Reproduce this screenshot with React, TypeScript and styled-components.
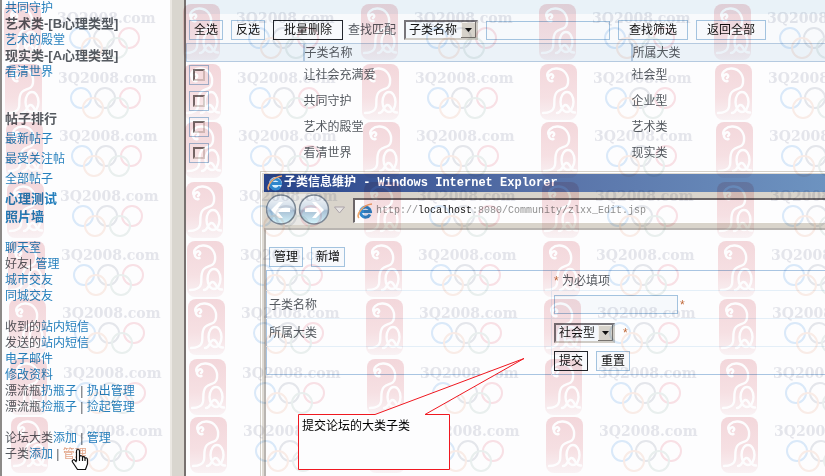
import React from "react";
import styled, { createGlobalStyle } from "styled-components";

const GlobalStyle = createGlobalStyle`
  * { box-sizing: border-box; }
  body {
    margin: 0;
    overflow: hidden;
    background: #fdfdfe;
    color: #555a60;
    font: 12px/16px "Liberation Sans", "Noto Sans CJK SC", sans-serif;
  }
  button, input, select { font: inherit; }
`;

const Page = styled.div`
  position: relative;
  display: flex;
  height: 100vh;
  overflow: hidden;
  background: #fdfdfe;
`;

const Sidebar = styled.nav`
  flex: 0 0 170px;
  border-left: 2px solid #8c8a88;
  padding-left: 3px;
  white-space: nowrap;
  display: flex;
  flex-direction: column;
  gap: 15px;
`;

const Group = styled.div<{ $spaced?: boolean }>`
  margin-top: ${(p) => (p.$spaced ? "14px" : "0")};
`;

const Line = styled.div<{ $bold?: boolean; $tall?: boolean }>`
  font-weight: ${(p) => (p.$bold ? 700 : 400)};
  font-size: ${(p) => (p.$bold ? 13 : 12)}px;
  line-height: ${(p) => (p.$tall ? 20 : 16)}px;
`;

const Link = styled.a<{ $hot?: boolean }>`
  color: ${(p) => (p.$hot ? "#e2a588" : "#2680bd")};
  text-decoration: none;
`;

const ScrollStrip = styled.div`
  flex: 0 0 16px;
  background: #d9d6cf;
  border-left: 2px solid #ebe8e3;
  border-right: 2px solid #77716f;
`;

const Main = styled.main`
  flex: 1;
  min-width: 0;
`;

const Toolbar = styled.div`
  display: flex;
  align-items: center;
  gap: 8px;
  height: 43px;
  padding: 17px 3px 0;
  background: linear-gradient(#e9f2f8 14px, #f8fafc 14px);
`;

const Button = styled.button<{ $strong?: boolean; $wide?: boolean }>`
  flex: none;
  width: ${(p) => (p.$wide ? 70 : 34)}px;
  height: 20px;
  padding: 0;
  border: 1px solid ${(p) => (p.$strong ? "#22262c" : "#a3c3df")};
  border-radius: 0;
  background: #f7f9fc;
  color: #111;
  line-height: 16px;
`;

const FieldLabel = styled.label`
  flex: none;
  margin: 0 0 0 -3px;
`;

const SelectBox = styled.span<{ $width: number }>`
  position: relative;
  flex: none;
  display: inline-block;
  width: ${(p) => p.$width}px;
  height: 20px;
  vertical-align: top;
`;

const Select = styled.select`
  appearance: none;
  display: block;
  width: 100%;
  height: 20px;
  padding: 0 0 0 3px;
  border: 2px solid;
  border-color: #77757a #cfccc6 #cfccc6 #77757a;
  border-radius: 0;
  background: #f4f8fc;
  color: #111;
  line-height: 16px;
`;

const SelectArrow = styled.svg`
  position: absolute;
  top: 2px;
  right: 2px;
  pointer-events: none;
`;

const TextField = styled.input`
  width: 124px;
  height: 19px;
  padding: 0 3px;
  border: 1px solid #a3c3df;
  border-radius: 0;
  background: #f6f9fc;
`;

const List = styled.table`
  width: 100%;
  table-layout: fixed;
  border-collapse: collapse;
  th, td { padding: 0; text-align: left; font-weight: 400; }
  th { height: 18px; line-height: 16px; background: #ebf2f8; border: 1px solid #b5cae0; border-right: 0; }
  th:nth-child(2), th:nth-child(3) { border-left-width: 2px; }
  td { height: 26px; }
  td:first-child { padding-left: 2px; }
  .pick { width: 117px; }
  .name { width: 328px; }
`;

const Tick = styled.span`
  display: grid;
  place-items: center;
  width: 20px;
  height: 20px;
  border: 1px solid #a3c3df;
`;

const TickBox = styled.input`
  appearance: none;
  width: 12px;
  height: 12px;
  margin: 0;
  border: 2px solid;
  border-color: #77706f #d8d3cf #d8d3cf #77706f;
  background: #fff;
`;

const Popup = styled.section`
  position: absolute;
  top: 171px;
  left: 260px;
  right: 0;
  bottom: 0;
  padding: 2px 0 0 3px;
  border: solid #d5d1c9;
  border-width: 1px 0 0 1px;
  background: #dedad3;
  box-shadow: inset 1px 1px #fff;
`;

const TitleBar = styled.h1`
  display: flex;
  align-items: center;
  gap: 1px;
  height: 18px;
  margin: 0;
  padding-left: 3px;
  background: linear-gradient(90deg, #27438a, #5872a8 50%, #6d93c0);
  color: #fff;
  font: bold 12px/18px "Liberation Mono", "Noto Sans CJK SC", monospace;
`;

const AddressRow = styled.div`
  display: flex;
  align-items: center;
  height: 36px;
  padding-left: 2px;
  background: #d9d4cb;
`;

const Address = styled.label`
  flex: 1;
  display: flex;
  align-items: center;
  gap: 3px;
  height: 25px;
  margin-left: 7px;
  padding-left: 2px;
  border: solid;
  border-width: 2px 0 1px 2px;
  border-color: #6b6668 #fff #fff #6b6668;
  background: #fdfdfe;
`;

const AddressInput = styled.input`
  flex: 1;
  min-width: 0;
  padding: 0;
  border: 0;
  outline: 0;
  background: linear-gradient(90deg, #8a8a8a 7ch, #111 7ch 16ch, #8a8a8a 16ch);
  background-clip: text;
  color: transparent;
  font: 10px/16px "Liberation Mono", monospace;
`;

const NavIcons = styled.svg`
  flex: none;
`;

const Content = styled.div`
  height: 100%;
  border: solid #b9b5b1;
  border-width: 2px 0 0 2px;
  background: #fdfdfe;
`;

const Actions = styled.div`
  display: flex;
  gap: 8px;
  padding: 17px 3px 3px;
`;

const FormTable = styled.table`
  width: 100%;
  table-layout: fixed;
  border-collapse: collapse;
  border: 1px solid #a9c5e2;
  border-right: 0;
  td, th { height: 28px; padding: 0 2px; text-align: left; font-weight: 400; border-top: 1px solid #e4eff8; }
  tr:first-child td { height: 20px; border-top-color: #a9c5e2; }
  td:nth-child(2) { border-left: 1px solid #e4eff8; }
  .label { width: 285px; }
`;

const Fields = styled.div`
  display: flex;
  align-items: center;
  gap: 8px;
`;

const Star = styled.span<{ $near?: boolean }>`
  margin-left: ${(p) => (p.$near ? "-6px" : "0")};
  color: #c0693a;
`;

const Watermark = styled.svg`
  position: absolute;
  top: 0;
  left: 0;
  width: 100%;
  height: 100%;
  pointer-events: none;
  mix-blend-mode: multiply;
`;

const Callout = styled.aside`
  position: absolute;
  top: 357px;
  left: 297px;
  width: 230px;
  height: 115px;
  padding: 61px 5px 0;
  color: #000;
`;

const CalloutShape = styled.svg`
  position: absolute;
  top: 0;
  left: 0;
`;

const CalloutText = styled.p`
  position: relative;
  margin: 0;
`;

const Hand = styled.svg`
  position: absolute;
  top: 448px;
  left: 71px;
`;

const records = [
  ["让社会充满爱", "社会型"],
  ["共同守护", "企业型"],
  ["艺术的殿堂", "艺术类"],
  ["看清世界", "现实类"],
];

function A({ children, hot }: { children: React.ReactNode; hot?: boolean }) {
  return <Link href="#" $hot={hot}>{children}</Link>;
}

function DropDown({ id, label, width, options }: { id: string; label?: string; width: number; options: string[] }) {
  return (
    <SelectBox $width={width}>
      <Select id={id} aria-label={label}>
        {options.map((o) => <option key={o}>{o}</option>)}
      </Select>
      <SelectArrow width="15" height="16" viewBox="0 0 15 16" aria-hidden="true">
        <path d="M0 0h15v16H0z" fill="#d6d2ca" />
        <path d="M.5 15V.5H14" fill="none" stroke="#f4f2ee" />
        <path d="M0 15.500h14.500V0" fill="none" stroke="#77736f" />
        <path d="M4 6h7L7.500 10z" fill="#111" />
      </SelectArrow>
    </SelectBox>
  );
}

function ExplorerIcon() {
  return (
    <NavIcons width="16" height="16" viewBox="0 0 16 16" aria-hidden="true">
      <circle cx="8.500" cy="8.500" r="6.500" fill="#d8efff" />
      <path d="M13 11.500A5 5 0 1 1 13.500 8.500H5" fill="none" stroke="#2f86cc" strokeWidth="2.800" />
      <path d="M2 15C-1 12 5 2 15 1" fill="none" stroke="#f0a86c" strokeWidth="1.600" />
    </NavIcons>
  );
}

function HistoryButtons() {
  return (
    <NavIcons width="80" height="34" viewBox="0 0 80 34" aria-hidden="true">
      <defs>
        <linearGradient id="orb" x2="0" y2="1">
          <stop offset="0" stopColor="#f4f7fa" />
          <stop offset=".48" stopColor="#cfdbe7" />
          <stop offset=".54" stopColor="#a9c0d4" />
          <stop offset="1" stopColor="#d4f4fc" />
        </linearGradient>
      </defs>
      <path d="M15 1H50a16 16 0 0 1 0 31H15a15 15 0 0 1 0-31z" fill="#e9e8e5" />
      {[15, 48].map((x) => (
        <circle key={x} cx={x} cy="16.500" r="14.500" fill="url(#orb)" stroke="#7c8794" strokeWidth="1.500" />
      ))}
      <path d="M5 17l8-8h4l-5 6h12v4H12l5 6h-4z" fill="#fff" />
      <path d="M58 17l-8-8h-4l5 6H39v4h12l-5 6h4z" fill="#fff" />
      <path d="M68.500 14h10l-5 6z" fill="#e8e5e4" stroke="#aaa3a8" />
    </NavIcons>
  );
}

const stampColumns = [0, 179, 357, 535, 710];
const stampRows = [4, 64, 122, 182, 241, 299, 359, 417];

function WatermarkLayer() {
  return (
    <Watermark aria-hidden="true">
      <defs>
        <linearGradient id="seal" x2="0" y2="1">
          <stop offset="0" stopColor="#f5d9dc" />
          <stop offset=".6" stopColor="#f8e2e4" />
          <stop offset="1" stopColor="#fbf4f5" />
        </linearGradient>
        <g id="mark">
          <rect width="37" height="56" rx="8" fill="url(#seal)" />
          <g fill="none" stroke="#fff" strokeWidth="2.400" strokeLinecap="round" strokeLinejoin="round">
            <path d="M12 14C15 12 12 9 9.500 11 6 14 9 18 12.500 17M8 14C5 9 11 4 17 4.500 25 5 29 12 28 19 27 26 21 24 17 28 13 32 15 39 14 43 13 48 8 49 3 49" />
            <ellipse cx="27" cy="38" rx="6.500" ry="10" />
            <path d="M17 49C22 49 21 42 25 41 30 40 28 49 35 48.500" />
          </g>
          <text x="53" y="19" fill="#e6e7ec" fontFamily="DejaVu Serif" fontWeight="700" fontSize="14">3Q2008.com</text>
          <g fill="none" strokeWidth="2">
            <circle cx="76" cy="34" r="10" stroke="#dcebfa" />
            <circle cx="100" cy="34" r="10" stroke="#e6e8ec" />
            <circle cx="125" cy="34" r="10" stroke="#fae2e6" />
            <circle cx="88" cy="44" r="10" stroke="#fbeee8" />
            <circle cx="113" cy="44" r="10" stroke="#ebf1ef" />
          </g>
        </g>
      </defs>
      {stampRows.map((y, row) =>
        stampColumns.map((x) => <use key={`${x}-${y}`} href="#mark" x={x + 4 + row} y={y} />)
      )}
    </Watermark>
  );
}

export default function App() {
  return (
    <Page>
      <GlobalStyle />
      <Sidebar>
        <Group>
          <Line><A>共同守护</A></Line>
          <Line $bold>艺术类-[B心理类型]</Line>
          <Line><A>艺术的殿堂</A></Line>
          <Line $bold>现实类-[A心理类型]</Line>
          <Line><A>看清世界</A></Line>
        </Group>
        <Group $spaced>
          <Line $bold $tall>帖子排行</Line>
          <Line $tall><A>最新帖子</A></Line>
          <Line $tall><A>最受关注帖</A></Line>
          <Line $tall><A>全部帖子</A></Line>
          <Line $bold $tall><A>心理测试</A></Line>
          <Line $bold><A>照片墙</A></Line>
        </Group>
        <Group>
          <Line><A>聊天室</A></Line>
          <Line>好友| <A>管理</A></Line>
          <Line><A>城市交友</A></Line>
          <Line><A>同城交友</A></Line>
        </Group>
        <Group>
          <Line>收到的<A>站内短信</A></Line>
          <Line>发送的<A>站内短信</A></Line>
          <Line><A>电子邮件</A></Line>
          <Line><A>修改资料</A></Line>
          <Line>漂流瓶<A>扔瓶子</A> | <A>扔出管理</A></Line>
          <Line>漂流瓶<A>捡瓶子</A> | <A>捡起管理</A></Line>
        </Group>
        <Group>
          <Line>论坛大类<A>添加</A> | <A>管理</A></Line>
          <Line>子类<A>添加</A> | <A hot>管理</A></Line>
        </Group>
      </Sidebar>
      <ScrollStrip />
      <Main>
        <Toolbar>
          <Button>全选</Button>
          <Button>反选</Button>
          <Button $wide $strong>批量删除</Button>
          <FieldLabel htmlFor="match">查找匹配</FieldLabel>
          <DropDown id="match" width={74} options={["子类名称", "所属大类"]} />
          <TextField aria-label="查找内容" />
          <Button $wide>查找筛选</Button>
          <Button $wide>返回全部</Button>
        </Toolbar>
        <List>
          <thead>
            <tr>
              <th className="pick" />
              <th className="name">子类名称</th>
              <th>所属大类</th>
            </tr>
          </thead>
          <tbody>
            {records.map(([name, kind]) => (
              <tr key={name}>
                <td><Tick><TickBox type="checkbox" aria-label={name} /></Tick></td>
                <td>{name}</td>
                <td>{kind}</td>
              </tr>
            ))}
          </tbody>
        </List>
      </Main>
      <Popup>
        <TitleBar><ExplorerIcon />子类信息维护 - Windows Internet Explorer</TitleBar>
        <AddressRow>
          <HistoryButtons />
          <Address>
            <ExplorerIcon />
            <AddressInput aria-label="地址" defaultValue="http://localhost:8080/Community/zlxx_Edit.jsp" />
          </Address>
        </AddressRow>
        <Content>
          <Actions>
            <Button>管理</Button>
            <Button>新增</Button>
          </Actions>
          <FormTable>
            <tbody>
              <tr>
                <td className="label" />
                <td><Star>*</Star> 为必填项</td>
              </tr>
              <tr>
                <td><label htmlFor="sub">子类名称</label></td>
                <td><Fields><TextField id="sub" /><Star $near>*</Star></Fields></td>
              </tr>
              <tr>
                <td><label htmlFor="kind">所属大类</label></td>
                <td><Fields><DropDown id="kind" width={61} options={["社会型", "企业型", "艺术类", "现实类"]} /><Star>*</Star></Fields></td>
              </tr>
              <tr>
                <td />
                <td><Fields><Button $strong>提交</Button><Button>重置</Button></Fields></td>
              </tr>
            </tbody>
          </FormTable>
        </Content>
      </Popup>
      <WatermarkLayer />
      <Callout>
        <CalloutShape width="230" height="115" viewBox="0 0 230 115" aria-hidden="true">
          <path d="M1.500 57.500H78L227 1.500 128 57.500H152.500V112.500H1.500z" fill="#fdfdfe" stroke="#f01820" />
        </CalloutShape>
        <CalloutText>提交论坛的大类子类</CalloutText>
      </Callout>
      <Hand width="18" height="23" viewBox="0 0 18 23" aria-hidden="true">
        <path d="M5.500 13V3C5.500 1 8.500 1 8.500 3V9C9 7 11.500 7.500 11.500 9.500 12 8 14 8.500 14 10.500 15 9 16.500 10 16.500 12V16L14.500 21.500H6.500L1.500 14C.5 12 3 11 4 12.500L5.500 14M8.500 9v4M11.500 9.500V13M14 10.500V13" fill="#fff" stroke="#111" strokeWidth="1.200" />
      </Hand>
    </Page>
  );
}
